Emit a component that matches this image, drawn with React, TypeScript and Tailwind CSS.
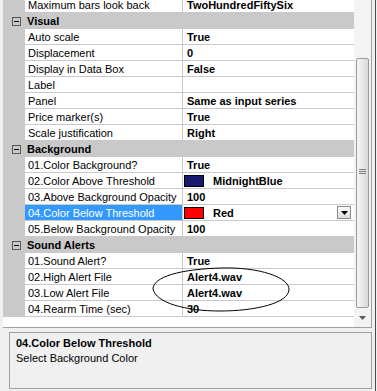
import React from 'react';

type Row =
  | { kind: 'cat'; name: string }
  | { kind: 'prop'; name: string; value?: string; color?: string; selected?: boolean };

const rows: Row[] = [
  { kind: 'prop', name: 'Maximum bars look back', value: 'TwoHundredFiftySix' },
  { kind: 'cat', name: 'Visual' },
  { kind: 'prop', name: 'Auto scale', value: 'True' },
  { kind: 'prop', name: 'Displacement', value: '0' },
  { kind: 'prop', name: 'Display in Data Box', value: 'False' },
  { kind: 'prop', name: 'Label', value: '' },
  { kind: 'prop', name: 'Panel', value: 'Same as input series' },
  { kind: 'prop', name: 'Price marker(s)', value: 'True' },
  { kind: 'prop', name: 'Scale justification', value: 'Right' },
  { kind: 'cat', name: 'Background' },
  { kind: 'prop', name: '01.Color Background?', value: 'True' },
  { kind: 'prop', name: '02.Color Above Threshold', value: 'MidnightBlue', color: '#191970' },
  { kind: 'prop', name: '03.Above Background Opacity', value: '100' },
  { kind: 'prop', name: '04.Color Below Threshold', value: 'Red', color: '#ff0000', selected: true },
  { kind: 'prop', name: '05.Below Background Opacity', value: '100' },
  { kind: 'cat', name: 'Sound Alerts' },
  { kind: 'prop', name: '01.Sound Alert?', value: 'True' },
  { kind: 'prop', name: '02.High Alert File', value: 'Alert4.wav' },
  { kind: 'prop', name: '03.Low Alert File', value: 'Alert4.wav' },
  { kind: 'prop', name: '04.Rearm Time (sec)', value: '30' },
];

function CategoryRow({ name }: { name: string }) {
  return (
    <div className="flex h-[16px] items-center bg-[#c9c9c9]">
      <div className="ml-[9px] flex h-[9px] w-[9px] items-center justify-center border border-[#5a5a5a]">
        <div className="h-[1px] w-[5px] bg-black" />
      </div>
      <span className="ml-[6px] font-bold text-black">{name}</span>
    </div>
  );
}

function PropRow({ row }: { row: Extract<Row, { kind: 'prop' }> }) {
  return (
    <div className="flex h-[16px] gap-[1px] bg-[#c9c9c9] pb-[1px]">
      <div className="w-[21px]" />
      <div
        className={
          row.selected
            ? 'flex w-[157px] items-center bg-[#3399ff] pl-[3px] text-white'
            : 'flex w-[157px] items-center bg-white pl-[3px] text-black'
        }
      >
        <span className="whitespace-nowrap">{row.name}</span>
      </div>
      <div className="flex flex-1 items-center bg-white font-bold text-black">
        {row.color ? (
          <>
            <div
              className="ml-[1px] h-[12px] w-[20px] border border-black"
              style={{ backgroundColor: row.color }}
            />
            <span className="ml-[9px] whitespace-nowrap">{row.value}</span>
            {row.selected && (
              <div className="ml-auto mr-[3px] flex h-[13px] w-[14px] items-center justify-center border border-[#8c8c8c] bg-gradient-to-b from-[#fafafa] to-[#dedede]">
                <svg width="7" height="4" viewBox="0 0 7 4">
                  <path d="M0 0H7L3.5 4Z" fill="#000" />
                </svg>
              </div>
            )}
          </>
        ) : (
          <span className="whitespace-nowrap pl-[4px]">{row.value}</span>
        )}
      </div>
    </div>
  );
}

function ScrollBar() {
  return (
    <div className="flex w-[17px] flex-col bg-[#f3f3f3]">
      <div className="h-[58px]" />
      <div className="mx-[2px] flex h-[250px] items-center justify-center rounded-[2px] border border-[#9a9a9a] bg-gradient-to-r from-[#f6f6f6] to-[#d9d9d9]">
        <div className="mt-[-24px] flex flex-col gap-[1px]">
          <div className="h-[1px] w-[7px] bg-[#7a7a7a]" />
          <div className="h-[1px] w-[7px] bg-[#7a7a7a]" />
          <div className="h-[1px] w-[7px] bg-[#7a7a7a]" />
        </div>
      </div>
      <div className="flex flex-1 items-center justify-center">
        <svg width="7" height="4" viewBox="0 0 7 4">
          <path d="M0 0H7L3.5 4Z" fill="#5a5a5a" />
        </svg>
      </div>
    </div>
  );
}

export default function App() {
  return (
    <div className="relative flex h-[391px] w-[377px] overflow-hidden bg-[#f0f0f0] font-['Liberation_Sans',Arial,sans-serif] text-[11px] leading-[14px]">
      <div className="flex w-[372px] flex-col">
        <div className="ml-[3px] flex h-[328px] border-r border-b border-[#a0a0a0] bg-white">
          <div className="flex-1 overflow-hidden">
            <div className="-mt-[3px]">
              {rows.map((row, i) =>
                row.kind === 'cat' ? (
                  <CategoryRow key={i} name={row.name} />
                ) : (
                  <PropRow key={i} row={row} />
                )
              )}
            </div>
          </div>
          <ScrollBar />
        </div>
        <div className="ml-[9px] mt-[4px] h-[57px] border border-[#a0a0a0] bg-[#f0f0f0] px-[6px] pt-[3px] text-black">
          <div className="font-bold leading-[15px]">04.Color Below Threshold</div>
          <div className="leading-[15px]">Select Background Color</div>
        </div>
      </div>
      <div className="w-[3px]" />
      <div className="w-[1px] bg-[#4a4a4a]" />
      <div className="w-[1px]" />

      <svg
        className="pointer-events-none absolute left-[150px] top-[263px]"
        width="144"
        height="54"
        viewBox="0 0 144 54"
      >
        <path
          d="M72 5 C108 4 140 14 139 27 C138 40 106 48 70 48 C36 48 6 40 3 26 C3 14 30 6 72 5 Z"
          fill="none"
          stroke="#000"
          strokeWidth="1"
        />
      </svg>
    </div>
  );
}
